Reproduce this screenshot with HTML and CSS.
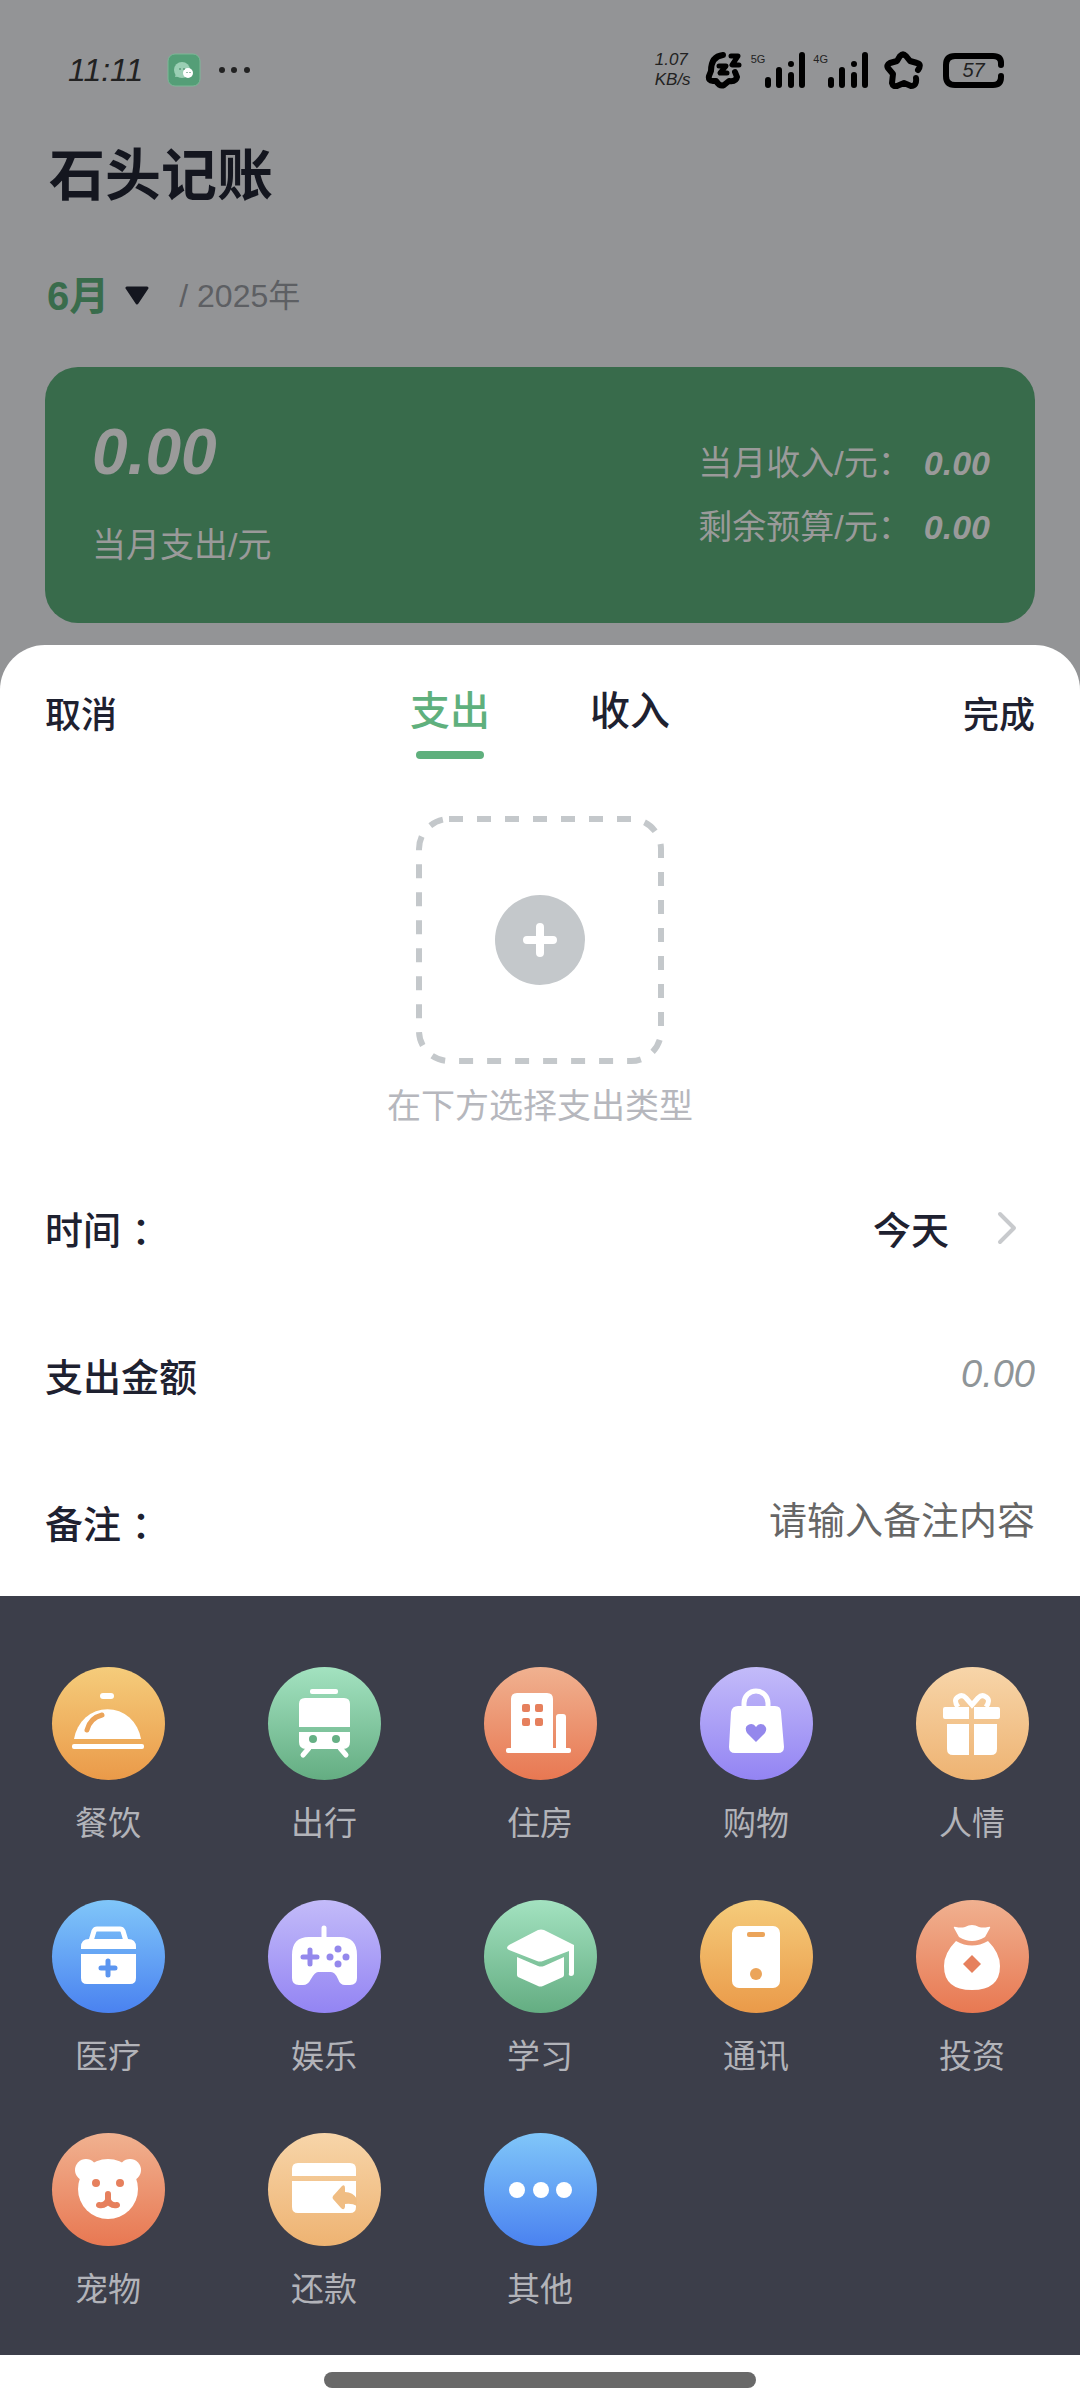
FILE: index.html
```html
<!DOCTYPE html>
<html lang="zh-CN">
<head>
<meta charset="utf-8">
<meta name="viewport" content="width=device-width, initial-scale=1">
<title>石头记账</title>
<link rel="stylesheet" href="styles.css">
</head>
<body>
<svg class="defs" width="0" height="0" aria-hidden="true">
  <defs>
    <g id="signal" stroke="#000" stroke-width="6" stroke-linecap="round">
      <path d="M3 28v5M14 18v15M26 23v10M26 12v0M37 3v30"/>
    </g>
  </defs>
</svg>
<div class="app">
  <header class="status">
    <div class="status-side">
      <time class="clock">11:11</time>
      <svg class="wechat" width="34" height="34" viewBox="0 0 34 34" aria-hidden="true">
        <rect x="1" y="1" width="32" height="32" rx="7" fill="#549e77" stroke="#7cb897"/>
        <path d="M8 24l1-5h8v5z" fill="#8fc7aa"/>
        <circle cx="15" cy="17" r="8" fill="#9bcfb4"/>
        <circle cx="21" cy="20" r="5" fill="#fff"/>
        <path d="M13 15v2M17 15v2M20 19v1M23 19v1" stroke="#3d7f5d" stroke-width="1"/>
      </svg>
      <svg width="34" height="8" viewBox="0 0 34 8" aria-hidden="true"><g fill="#222"><circle cx="4" cy="4" r="3"/><circle cx="16" cy="4" r="3"/><circle cx="29" cy="4" r="3"/></g></svg>
    </div>
    <div class="status-side icons">
      <p class="speed">1.07<br>KB/s</p>
      <svg width="38" height="38" viewBox="0 0 38 38" fill="none" stroke="#000" stroke-width="6" stroke-linecap="round" stroke-linejoin="round" aria-hidden="true">
        <path d="M18 4C9 5 6 12 6 20L4 25q-1 5 4 5l3 0q4 6 8 4l5-4q7 1 8-4l-2-5"/>
        <path d="M26 5h7l-6 9h7M14 15h7l-6 7h7" stroke-width="5"/>
      </svg>
      <div class="net">
        <span class="net-label">5G</span>
        <svg width="40" height="37" viewBox="0 0 40 37" aria-hidden="true"><use href="#signal"/></svg>
      </div>
      <div class="net">
        <span class="net-label">4G</span>
        <svg width="40" height="37" viewBox="0 0 40 37" aria-hidden="true"><use href="#signal"/></svg>
      </div>
      <svg class="star" width="40" height="38" viewBox="0 0 40 38" fill="none" stroke="#000" stroke-width="6" stroke-linecap="round" stroke-linejoin="round" aria-hidden="true">
        <path d="M34 19q4-6-1-7l-7-2-4-5q-3-3-6 0l-3 5-7 2q-4 2-2 5l5 6-1 9q1 4 5 3l7-3 7 3q6 0 5-8"/>
      </svg>
      <div class="battery">
        <svg class="battery-frame" width="63" height="37" viewBox="0 0 63 37" fill="none" stroke="#000" stroke-width="6" stroke-linecap="round" aria-hidden="true">
          <path d="M59 13V11q0-7-8-7H13Q4 4 4 13v11q0 9 9 9h38q8 0 8-8v-1"/>
        </svg>
        <span>57</span>
      </div>
    </div>
  </header>

  <main class="home">
    <h1 class="title">石头记账</h1>
    <div class="period">
      <button class="month" type="button">6月
        <svg width="24" height="20" viewBox="0 0 24 20" aria-hidden="true"><path d="M2 2h20L12 17z" fill="#14161f" stroke="#14161f" stroke-width="3" stroke-linejoin="round"/></svg>
      </button>
      <span class="year">/ 2025年</span>
    </div>
    <section class="summary">
      <div class="spent">
        <strong class="spent-value">0.00</strong>
        <span>当月支出/元</span>
      </div>
      <dl class="totals">
        <div><dt>当月收入/元：</dt><dd>0.00</dd></div>
        <div><dt>剩余预算/元：</dt><dd>0.00</dd></div>
      </dl>
    </section>
  </main>

  <form class="sheet">
    <div class="toolbar">
      <button class="action" type="button">取消</button>
      <div class="tabs">
        <button class="tab active" type="button">支出</button>
        <button class="tab" type="button">收入</button>
      </div>
      <button class="action" type="button">完成</button>
    </div>

    <div class="picker">
      <button class="drop" type="button" aria-label="选择类型">
        <svg width="248" height="248" viewBox="0 0 248 248" aria-hidden="true">
          <rect x="3" y="3" width="242" height="242" rx="30" fill="none" stroke="#c4c8cb" stroke-width="6" stroke-dasharray="14 14"/>
          <circle cx="124" cy="124" r="45" fill="#c4c8cb"/>
          <path d="M124 111v26M111 124h26" stroke="#fff" stroke-width="8" stroke-linecap="round"/>
        </svg>
      </button>
      <p class="hint">在下方选择支出类型</p>
    </div>

    <div class="fields">
      <div class="field">
        <span>时间 ：</span>
        <button class="date" type="button">今天
          <svg width="20" height="34" viewBox="0 0 20 34" aria-hidden="true"><path d="M3 3l14 14L3 31" fill="none" stroke="#c8cacd" stroke-width="4" stroke-linecap="round" stroke-linejoin="round"/></svg>
        </button>
      </div>
      <div class="field">
        <label for="amount">支出金额</label>
        <input class="entry amount" id="amount" type="text" inputmode="decimal" placeholder="0.00">
      </div>
      <div class="field">
        <label for="note">备注 ：</label>
        <input class="entry" id="note" type="text" placeholder="请输入备注内容">
      </div>
    </div>

    <div class="categories">
      <button class="category" type="button">
        <svg class="badge orange" viewBox="0 0 113 113" fill="#fff" aria-hidden="true">
          <rect x="48" y="26" width="14" height="6" rx="3"/>
          <path d="M22 72a34 36 0 0 1 67 0z"/>
          <rect x="20" y="77" width="72" height="5" rx="2"/>
          <path d="M35 63Q38 51 50 48" fill="none" stroke="#eba45a" stroke-width="5" stroke-linecap="round"/>
        </svg>
        <span>餐饮</span>
      </button>
      <button class="category" type="button">
        <svg class="badge green" viewBox="0 0 113 113" fill="#fff" aria-hidden="true">
          <rect x="42" y="22" width="28" height="5" rx="2"/>
          <path d="M31 60V37q0-6 6-6h39q6 0 6 6v23zM31 65h51v10q0 7-7 7H38q-7 0-7-7z"/>
          <path d="M41 81l-6 7M72 81l6 7" stroke="#fff" stroke-width="5" stroke-linecap="round"/>
          <g fill="#66b085"><circle cx="45" cy="72" r="4"/><circle cx="68" cy="72" r="4"/></g>
        </svg>
        <span>出行</span>
      </button>
      <button class="category" type="button">
        <svg class="badge coral" viewBox="0 0 113 113" fill="#fff" aria-hidden="true">
          <path d="M27 82V32q0-6 6-6h30q6 0 6 6v50zM72 82V50q0-3 3-3h4q3 0 3 3v32z"/>
          <rect x="22" y="81" width="65" height="5" rx="2"/>
          <g fill="#e6805d"><rect x="38" y="37" width="8" height="8" rx="2"/><rect x="51" y="37" width="8" height="8" rx="2"/><rect x="38" y="51" width="8" height="8" rx="2"/><rect x="51" y="51" width="8" height="8" rx="2"/></g>
        </svg>
        <span>住房</span>
      </button>
      <button class="category" type="button">
        <svg class="badge purple" viewBox="0 0 113 113" fill="#fff" aria-hidden="true">
          <path d="M44 42V36a12 12 0 0 1 24 0v6" fill="none" stroke="#fff" stroke-width="5"/>
          <path d="M38 39h37q6 0 6 6l3 35q0 6-6 6H35q-6 0-6-6l2-35q1-6 7-6z"/>
          <path d="M56 75L47 66q-3-6 1-8 5-3 8 2 3-5 8-2 4 3 1 8z" fill="#9488ec"/>
        </svg>
        <span>购物</span>
      </button>
      <button class="category" type="button">
        <svg class="badge peach" viewBox="0 0 113 113" fill="#fff" aria-hidden="true">
          <path d="M53 40H29q-2 0-2 2v8q0 2 2 2h24zM58 40h24q2 0 2 2v8q0 2-2 2H58zM53 57H31v25q0 6 6 6h16zM58 57h23v25q0 6-6 6H58z"/>
          <path d="M42 40q-5-7 0-10 4-3 8 1l6 7 6-7q4-4 8-1 5 3 0 10" fill="none" stroke="#fff" stroke-width="5"/>
        </svg>
        <span>人情</span>
      </button>

      <button class="category" type="button">
        <svg class="badge blue" viewBox="0 0 113 113" fill="#fff" aria-hidden="true">
          <path d="M39 41l3-10q1-2 3-2h23q2 0 3 2l3 10" fill="none" stroke="#fff" stroke-width="5"/>
          <path d="M29 49v-2q0-8 8-8h39q8 0 8 8v2zM29 54h55v24q0 6-6 6H35q-6 0-6-6z"/>
          <path d="M56 61v14M49 68h14" stroke="#5b95f0" stroke-width="5" stroke-linecap="round"/>
        </svg>
        <span>医疗</span>
      </button>
      <button class="category" type="button">
        <svg class="badge purple" viewBox="0 0 113 113" fill="#fff" aria-hidden="true">
          <path d="M56 28v12" stroke="#fff" stroke-width="5" stroke-linecap="round"/>
          <path d="M41 37h31q17 0 17 18v23q0 7-7 7h-5q-5 0-7-6-3-7-7-7H50q-3 0-7 7-3 6-8 6h-4q-7 0-7-7V55q0-18 17-18z"/>
          <path d="M42 50v14M35 57h14" stroke="#9488ec" stroke-width="5" stroke-linecap="round"/>
          <g fill="#9488ec"><circle cx="70" cy="49" r="3.500"/><circle cx="62" cy="57" r="3.500"/><circle cx="78" cy="57" r="3.500"/><circle cx="70" cy="64" r="3.500"/></g>
        </svg>
        <span>娱乐</span>
      </button>
      <button class="category" type="button">
        <svg class="badge green" viewBox="0 0 113 113" fill="#fff" aria-hidden="true">
          <path d="M25 45l29-15q3-1 6 0l30 15v28q0 3-3 3t-2-3V51L59 61q-3 1-6 0L25 50q-4-2 0-5z"/>
          <path d="M33 57l21 9q3 1 6 0l20-9v18q0 1-1 2l-20 9q-3 1-5 0l-20-9q-1-1-1-2z"/>
        </svg>
        <span>学习</span>
      </button>
      <button class="category" type="button">
        <svg class="badge orange" viewBox="0 0 113 113" fill="#fff" aria-hidden="true">
          <rect x="32" y="26" width="48" height="62" rx="7"/>
          <rect x="47" y="32" width="18" height="5" rx="2" fill="#eba45a"/>
          <circle cx="56" cy="74" r="6" fill="#eba45a"/>
        </svg>
        <span>通讯</span>
      </button>
      <button class="category" type="button">
        <svg class="badge coral" viewBox="0 0 113 113" fill="#fff" aria-hidden="true">
          <path d="M38 28q-1-2 2-1 5 1 9 0 7-4 14 0 4 1 9 0 3-1 2 1l-5 9q-13 8-26 0z"/>
          <path d="M40 41q16 9 32 0 12 12 12 25 0 24-28 24T28 66q0-13 12-25z"/>
          <path d="M56 55l9 9-9 9-9-9z" fill="#e6805d"/>
        </svg>
        <span>投资</span>
      </button>

      <button class="category" type="button">
        <svg class="badge coral" viewBox="0 0 113 113" fill="#fff" aria-hidden="true">
          <circle cx="34" cy="37" r="11"/><circle cx="78" cy="37" r="11"/><circle cx="56" cy="56" r="30"/>
          <g fill="#e6805d"><circle cx="44" cy="50" r="4"/><circle cx="68" cy="50" r="4"/></g>
          <path d="M56 61v6M47 72q7 1 9-5 2 6 9 5" fill="none" stroke="#e6805d" stroke-width="6" stroke-linecap="round" stroke-linejoin="round"/>
        </svg>
        <span>宠物</span>
      </button>
      <button class="category" type="button">
        <svg class="badge peach" viewBox="0 0 113 113" fill="#fff" aria-hidden="true">
          <path d="M24 43v-7q0-6 6-6h52q6 0 6 6v7zM24 48h64v26q0 6-6 6H30q-6 0-6-6z"/>
          <path d="M65 63l9-10q3-2 3 2v4q8 0 12 7v7q-5-3-12-2v3q-1 4-4 1l-8-9q-1-1 0-3z" fill="#f0bd83"/>
        </svg>
        <span>还款</span>
      </button>
      <button class="category" type="button">
        <svg class="badge blue" viewBox="0 0 113 113" fill="#fff" aria-hidden="true">
          <circle cx="33" cy="57" r="8"/><circle cx="57" cy="57" r="8"/><circle cx="80" cy="57" r="8"/>
        </svg>
        <span>其他</span>
      </button>
    </div>
    <div class="homebar"></div>
  </form>
</div>
</body>
</html>
```

FILE: styles.css
```css
* {
  box-sizing: border-box;
}

body {
  margin: 0;
  background: #939496;
  color: #1e2130;
  font-family: "Liberation Sans", "Noto Sans CJK SC", sans-serif;
}

h1,
p,
dl,
dd {
  margin: 0;
}

button,
input {
  padding: 0;
  border: 0;
  background: none;
  color: inherit;
  font: inherit;
}

.defs {
  position: absolute;
}

.app {
  display: flex;
  flex-direction: column;
  min-height: 100vh;
}

/* status bar */

.status {
  display: flex;
  align-items: center;
  justify-content: space-between;
  height: 140px;
  padding: 0 75px 0 68px;
  color: #222;
}

.status-side {
  display: flex;
  align-items: center;
}

.clock {
  font-size: 32px;
  font-style: italic;
}

.wechat {
  margin: 0 17px 0 24px;
}

.icons {
  gap: 12px;
}

.speed {
  margin-right: 2px;
  font-size: 17px;
  font-style: italic;
  line-height: 20px;
}

.net {
  display: flex;
  align-items: flex-start;
  margin-left: -4px;
}

.net-label {
  font-size: 11px;
  line-height: 14px;
}

.star {
  margin-left: 4px;
}

.battery {
  display: grid;
  place-items: center;
  margin-left: 6px;
  font-size: 20px;
  font-style: italic;
}

.battery > * {
  grid-area: 1 / 1;
}

/* dimmed home page */

.home {
  padding: 0 45px 22px;
}

.title {
  padding-left: 4px;
  color: #14161f;
  font-size: 56px;
  line-height: 72px;
}

.period {
  display: flex;
  align-items: center;
  gap: 30px;
  margin-top: 56px;
  margin-bottom: 43px;
  padding-left: 2px;
  line-height: 56px;
}

.month {
  display: flex;
  align-items: center;
  gap: 16px;
  color: #396c4c;
  font-size: 40px;
  font-weight: bold;
}

.year {
  color: #5d5f63;
  font-size: 32px;
}

.summary {
  display: flex;
  align-items: center;
  justify-content: space-between;
  height: 256px;
  padding: 0 45px 0 47px;
  border-radius: 33px;
  background: #386b4b;
  color: #9a9a9a;
  font-size: 34px;
}

.spent {
  display: flex;
  flex-direction: column;
  gap: 36px;
  line-height: 50px;
}

.spent-value {
  font-size: 64px;
  font-style: italic;
  line-height: 64px;
}

.totals {
  display: grid;
  gap: 14px;
  line-height: 50px;
}

.totals div {
  display: flex;
  gap: 12px;
}

.totals dd {
  font-weight: bold;
  font-style: italic;
}

/* entry sheet */

.sheet {
  display: flex;
  flex: 1;
  flex-direction: column;
  border-radius: 45px 45px 0 0;
  background: #fff;
}

.toolbar {
  display: grid;
  grid-template-columns: 1fr auto 1fr;
  align-items: start;
  padding: 38px 45px 0;
}

.action {
  justify-self: start;
  font-size: 36px;
  font-weight: 500;
  line-height: 66px;
}

.action:last-child {
  justify-self: end;
}

.tabs {
  display: flex;
  gap: 100px;
}

.tab {
  display: flex;
  flex-direction: column;
  align-items: center;
  gap: 12px;
  font-size: 40px;
  font-weight: 500;
  line-height: 56px;
}

.tab::after {
  width: 68px;
  height: 8px;
  border-radius: 4px;
  content: "";
}

.tab.active {
  color: #5fb07d;
}

.tab.active::after {
  background: #5fb07d;
}

.picker {
  display: flex;
  flex-direction: column;
  align-items: center;
  padding-top: 57px;
}

.drop svg {
  display: block;
}

.hint {
  margin-top: 18px;
  color: #b6b7bd;
  font-size: 34px;
  line-height: 48px;
}

.fields {
  padding: 24px 45px 1px;
}

.field {
  display: flex;
  align-items: center;
  justify-content: space-between;
  height: 147px;
  font-size: 38px;
  font-weight: 500;
}

.date {
  display: flex;
  align-items: center;
  gap: 48px;
  margin-right: 18px;
}

.entry {
  flex: 1;
  min-width: 0;
  height: 60px;
  font-weight: 400;
  text-align: right;
}

.entry::placeholder {
  color: #666;
  opacity: 1;
}

.amount::placeholder {
  color: #8f9598;
  font-style: italic;
}

/* category panel */

.categories {
  display: grid;
  grid-template-columns: repeat(5, 1fr);
  row-gap: 52px;
  padding: 71px 0 41px;
  background: #3c3e4a;
}

.category {
  display: flex;
  flex-direction: column;
  align-items: center;
  gap: 20px;
  color: #b2b3b9;
  font-size: 33px;
  line-height: 48px;
}

.badge {
  width: 113px;
  height: 113px;
  border-radius: 50%;
}

.orange {
  background: linear-gradient(#f5cc7b, #ea9a49);
}

.green {
  background: linear-gradient(#a3e2c0, #64ad82);
}

.coral {
  background: linear-gradient(#f0b190, #e87852);
}

.purple {
  background: linear-gradient(#c3bbf9, #9384f3);
}

.peach {
  background: linear-gradient(#f7d5a9, #eeb372);
}

.blue {
  background: linear-gradient(#80c6f9, #4a82f0);
}

.homebar {
  width: 40%;
  height: 16px;
  margin: 17px auto 12px;
  border-radius: 8px;
  background: #696969;
}
```
